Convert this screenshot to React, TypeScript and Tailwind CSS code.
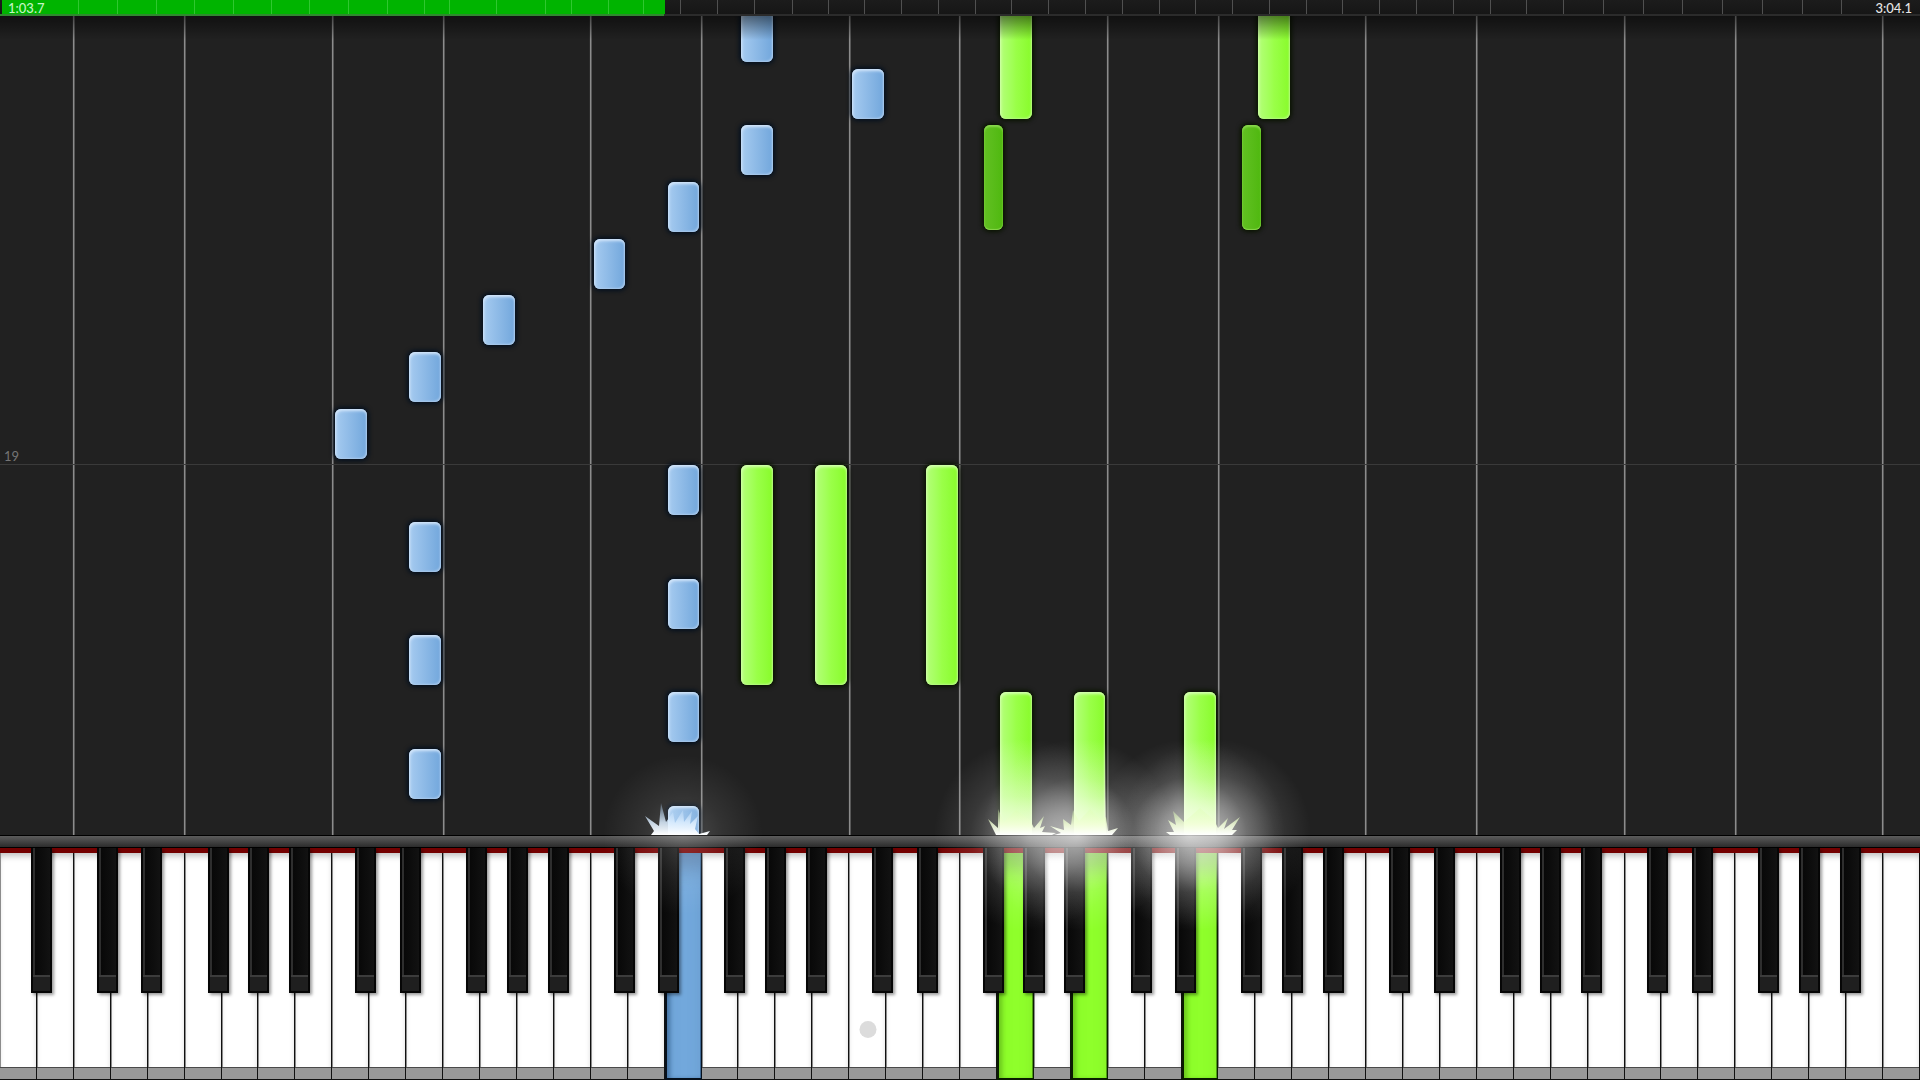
import { clsx } from "clsx";

const WHITE_KEY_COUNT = 52;
const KEY_WIDTH = 100 / WHITE_KEY_COUNT;
const LETTERS = ["A", "B", "C", "D", "E", "F", "G"];

// White keys between two guide lines, lowest key first
const LANES = [2, 3, 4, 3, 4, 3, 4, 3, 4, 3, 4, 3, 4, 3, 4, 1];

// Measure marks on the song timeline, in 1/1920 of its width
const MARKS = [
    78, 117, 156, 194, 233, 271, 309, 348, 387, 424, 449, 496, 545, 571, 608, 643, 680, 717, 754, 792, 828, 864,
    901, 938, 975, 1011, 1048, 1085, 1122, 1159, 1195, 1232, 1269, 1306, 1342, 1379, 1416, 1453, 1490, 1526, 1563,
    1603, 1643, 1682, 1722, 1762, 1802, 1841,
];

type Hand = "left" | "right";

type Note = {
    pitch: number;
    bottom: number;
    length: number;
    hand: Hand;
    sharp?: boolean;
};

// bottom = distance above the keyboard
const NOTES: Note[] = [
    { pitch: 20, bottom: 773, length: 50, hand: "left" },
    { pitch: 23, bottom: 716, length: 50, hand: "left" },
    { pitch: 20, bottom: 660, length: 50, hand: "left" },
    { pitch: 18, bottom: 603, length: 50, hand: "left" },
    { pitch: 16, bottom: 546, length: 50, hand: "left" },
    { pitch: 13, bottom: 490, length: 50, hand: "left" },
    { pitch: 11, bottom: 433, length: 50, hand: "left" },
    { pitch: 9, bottom: 376, length: 50, hand: "left" },
    { pitch: 18, bottom: 320, length: 50, hand: "left" },
    { pitch: 11, bottom: 263, length: 50, hand: "left" },
    { pitch: 18, bottom: 206, length: 50, hand: "left" },
    { pitch: 11, bottom: 150, length: 50, hand: "left" },
    { pitch: 18, bottom: 93, length: 50, hand: "left" },
    { pitch: 11, bottom: 36, length: 50, hand: "left" },
    { pitch: 18, bottom: -21, length: 50, hand: "left" },
    { pitch: 27, bottom: 716, length: 220, hand: "right" },
    { pitch: 34, bottom: 716, length: 220, hand: "right" },
    { pitch: 26, bottom: 605, length: 105, hand: "right", sharp: true },
    { pitch: 33, bottom: 605, length: 105, hand: "right", sharp: true },
    { pitch: 20, bottom: 150, length: 220, hand: "right" },
    { pitch: 22, bottom: 150, length: 220, hand: "right" },
    { pitch: 25, bottom: 150, length: 220, hand: "right" },
    { pitch: 27, bottom: -77, length: 220, hand: "right" },
    { pitch: 29, bottom: -77, length: 220, hand: "right" },
    { pitch: 32, bottom: -77, length: 220, hand: "right" },
];

const PRESSED: Record<number, Hand> = { 18: "left", 27: "right", 29: "right", 32: "right" };

const SPARKS = [
    {
        pitch: 18,
        hand: "left",
        d: "M12 33 L15 29 L6 14 L20 24 L22 1 L27 20 L34 10 L36 21 L44 8 L45 20 L53 9 L51 22 L59 14 L56 27 L60 32 L71 29 L68 33 Z",
    },
    {
        pitch: 27,
        hand: "right",
        d: "M24 33 L16 17 L26 26 L26 7 L32 20 L44 8 L58 18 L62 26 L72 14 L68 26 L73 24 L70 30 L84 31 L80 33 Z",
    },
    {
        pitch: 29,
        hand: "right",
        d: "M8 33 L15 31 L4 24 L18 28 L17 17 L25 23 L27 8 L33 19 L44 7 L55 18 L60 15 L62 29 L72 26 L66 33 Z",
    },
    {
        pitch: 32,
        hand: "right",
        d: "M14 33 L10 30 L18 30 L12 18 L20 23 L17 9 L28 20 L44 6 L58 18 L62 26 L72 16 L68 27 L84 15 L76 28 L81 28 L76 33 Z",
    },
];

const GLOWS = [
    { pitch: 18, tone: "dim" },
    { pitch: 27.4, tone: "soft" },
    { pitch: 28.7, tone: "bright" },
    { pitch: 31.7, tone: "bright" },
    { pitch: 32.4, tone: "soft" },
];

function SongTimeline() {
    return (
        <header className="relative h-4 bg-linear-to-b from-[#1c1c1c] to-[#151515]">
            <div
                role="progressbar"
                aria-label="Song position"
                aria-valuemin={0}
                aria-valuemax={184}
                aria-valuenow={64}
                className="ml-0.5 h-full bg-[#00b400]"
                style={{ width: "34.53%" }}
            />
            {MARKS.map((mark) => (
                <span
                    key={mark}
                    className={clsx("absolute top-0 h-full w-px", mark < 664 ? "bg-[#2fc82f]" : "bg-[#505050]")}
                    style={{ left: `${(mark / 1920) * 100}%` }}
                />
            ))}
            <div className="absolute inset-x-0 bottom-0 h-0.5 bg-[#2b2b2b]" />
            <div className="absolute bottom-0 left-0 h-0.5 w-[34.6%] bg-[#2f8a2f]" />
            <div className="absolute inset-0 flex items-center justify-between px-2 font-['Lato',sans-serif] text-[13px] leading-4 font-medium">
                <span className="text-[#c4f5c4]">1:03.7</span>
                <span className="text-[#e6e6e6]">3:04.1</span>
            </div>
        </header>
    );
}

function NoteBar({ note }: { note: Note }) {
    const left = (note.pitch + (note.sharp ? 0.64 : 0.08)) * KEY_WIDTH;
    const width = KEY_WIDTH * (note.sharp ? 0.52 : 0.86);

    return (
        <div
            className={clsx(
                "absolute rounded-md",
                note.sharp &&
                    "bg-linear-to-r from-[#62c022] to-[#4fb80e] shadow-[0_0_4px_2px_#0a1400,inset_0_2px_2px_#8ad84e,inset_0_-1px_1px_#8ad84e]",
                !note.sharp &&
                    note.hand === "right" &&
                    "bg-linear-to-r from-[#b4ff78] via-[#9aff48] to-[#88fb28] shadow-[0_0_4px_2px_#0a1400,inset_1px_2px_3px_#d6ffb4,inset_-1px_-1px_2px_#b4f880]",
                !note.sharp &&
                    note.hand === "left" &&
                    "bg-linear-to-r from-[#a6cbf0] to-[#72a7dc] shadow-[0_0_4px_2px_#04101f,inset_1px_2px_3px_#d4e6fa,inset_-1px_-1px_2px_#a8c8ea]",
            )}
            style={{ left: `${left}%`, width: `${width}%`, bottom: note.bottom, height: note.length }}
        />
    );
}

function PianoRoll() {
    return (
        <main className="relative flex min-h-[819px] flex-1 overflow-hidden bg-[#212121]">
            {LANES.map((keys, index) => (
                <div
                    key={index}
                    className={clsx(index > 0 && "border-l border-[#8c8c8c] shadow-[-1px_0_0_#2c2c2c,inset_1px_0_0_#585858]")}
                    style={{ flex: `${keys} 0 0%` }}
                />
            ))}
            <div className="absolute inset-x-0 bottom-[370px] border-b border-[#3a3a3a] px-1 font-['Lato',sans-serif] text-[13px] leading-4 text-[#757575]">
                19
            </div>
            {NOTES.map((note, index) => (
                <NoteBar key={index} note={note} />
            ))}
            <div className="absolute inset-x-0 top-0 h-6 bg-linear-to-b from-black/50 to-transparent" />
        </main>
    );
}

function BlackKey({ letter }: { letter: string }) {
    return (
        <button
            type="button"
            aria-label={`${letter} sharp`}
            className={clsx(
                "absolute -top-[5px] z-10 flex h-[145px] w-[57%] flex-col bg-[#060606] px-[2px] pb-[2px] shadow-[2px_2px_3px_rgba(0,0,0,0.4)]",
                (letter === "C" || letter === "F") && "left-[62%]",
                letter === "G" && "left-[72%]",
                (letter === "D" || letter === "A") && "left-[83%]",
            )}
        >
            <span className="w-full flex-1 border-l-2 border-[#2e2e2e] bg-linear-to-r from-[#080808] to-[#121212]" />
            <span className="h-4 w-full border-t-2 border-[#3c3c3c] bg-[#1f1f1f]" />
        </button>
    );
}

function WhiteKey({ index }: { index: number }) {
    const letter = LETTERS[index % 7];
    const hand = PRESSED[index];
    const hasSharp = letter !== "B" && letter !== "E" && index < WHITE_KEY_COUNT - 1;

    return (
        <div className="relative flex-1">
            <button
                type="button"
                aria-label={letter}
                className={clsx(
                    "flex h-full w-full flex-col justify-end border-r border-b",
                    !hand && "border-[#111111] bg-white shadow-[inset_1px_0_0_#8c8c8c,inset_0_5px_6px_-2px_rgba(0,0,0,0.25)]",
                    hand === "left" && "border-b-2 border-l-2 border-[#06101c] bg-[#72a8dc] shadow-[inset_4px_0_4px_-1px_#4674a4,inset_-1px_0_0_#3d6894,inset_0_24px_20px_-10px_rgba(60,90,130,0.5)]",
                    hand === "right" && "border-b-2 border-l-2 border-[#0a1c00] bg-[#8fff2b] shadow-[inset_4px_0_4px_-1px_#6cc81e,inset_-1px_0_0_#4e9a14,inset_0_24px_20px_-10px_rgba(70,130,30,0.6)]",
                )}
            >
                {!hand && <span className="h-3 w-full border-t border-[#4a4a4a] bg-[#999999]" />}
            </button>
            {hasSharp && <BlackKey letter={letter} />}
            {index === 23 && (
                <span className="absolute bottom-[42px] left-1/2 h-[17px] w-[17px] -translate-x-1/2 rounded-full bg-[#dcdcdc]" />
            )}
        </div>
    );
}

function Keyboard() {
    return (
        <footer className="relative">
            <div className="h-3 border-t border-black bg-linear-to-b from-[#5c5c5c] via-[#444444] to-[#2c2c2c]" />
            <div className="h-[6px] border-t border-black bg-[#740000]" />
            <div className="flex h-[227px]">
                {Array.from({ length: WHITE_KEY_COUNT }, (_, index) => (
                    <WhiteKey key={index} index={index} />
                ))}
            </div>
            <KeyLight />
        </footer>
    );
}

// Light and sparks where the sounding notes touch the keys
function KeyLight() {
    return (
        <div className="pointer-events-none absolute inset-x-0 top-0 z-20">
            {GLOWS.map((glow) => (
                <div
                    key={glow.pitch}
                    className={clsx(
                        "absolute -translate-x-1/2 -translate-y-1/2 rounded-full",
                        glow.tone === "dim" &&
                            "h-40 w-40 bg-[radial-gradient(closest-side,rgba(255,255,255,0.2),rgba(255,255,255,0.08)_50%,transparent)]",
                        glow.tone === "soft" &&
                            "h-48 w-48 bg-[radial-gradient(closest-side,rgba(255,255,255,0.4),rgba(255,255,255,0.28)_30%,rgba(255,255,255,0.1)_62%,transparent)]",
                        glow.tone === "bright" &&
                            "h-48 w-48 bg-[radial-gradient(closest-side,rgba(255,255,255,0.62),rgba(255,255,255,0.4)_30%,rgba(255,255,255,0.13)_60%,transparent)]",
                    )}
                    style={{ left: `${(glow.pitch + 0.5) * KEY_WIDTH}%` }}
                />
            ))}
            {SPARKS.map((spark) => (
                <svg
                    key={spark.pitch}
                    viewBox="0 0 88 96"
                    className="absolute bottom-0 h-24 w-[88px] -translate-x-1/2 overflow-hidden"
                    style={{ left: `${(spark.pitch + 0.51) * KEY_WIDTH}%` }}
                >
                    <defs>
                        <linearGradient id={`shine-${spark.pitch}`} x1="0" y1="0" x2="0" y2="1">
                            <stop offset="0" stopColor="#f6ffe4" stopOpacity="0" />
                            <stop offset="0.6" stopColor="#f6ffe4" stopOpacity="0.35" />
                            <stop offset="1" stopColor="#f6ffe4" stopOpacity="0.95" />
                        </linearGradient>
                        <linearGradient id={`spark-${spark.pitch}`} x1="0" y1="0" x2="0" y2="1">
                            <stop offset="0" stopColor={spark.hand === "left" ? "#a9cdf2" : "#dcffb0"} stopOpacity="0.3" />
                            <stop offset="0.6" stopColor={spark.hand === "left" ? "#dceeff" : "#f2ffd8"} stopOpacity="0.85" />
                            <stop offset="1" stopColor="#ffffff" />
                        </linearGradient>
                    </defs>
                    {spark.hand === "right" && (
                        <rect x="28" y="0" width="32" height="96" fill={`url(#shine-${spark.pitch})`} />
                    )}
                    <path d={spark.d} transform="translate(0 63)" fill={`url(#spark-${spark.pitch})`} />
                </svg>
            ))}
        </div>
    );
}

export default function App() {
    return (
        <div className="flex min-h-screen flex-col overflow-hidden bg-black font-['Open_Sans',sans-serif]">
            <SongTimeline />
            <PianoRoll />
            <Keyboard />
        </div>
    );
}
